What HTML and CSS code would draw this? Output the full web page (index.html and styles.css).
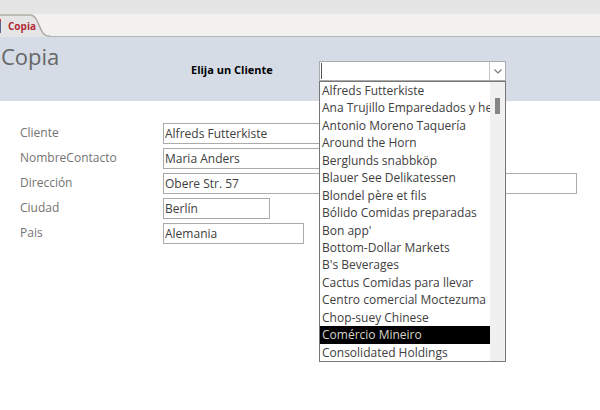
FILE: index.html
```html
<!DOCTYPE html>
<html lang="es">
  <head>
    <title>Copia</title>
    <meta charset="utf-8" />
    <link rel="stylesheet" href="styles.css">
  </head>
  <body>
    <div class="ribbon"></div>

    <div class="tabs">
      <button class="tab" type="button">
        <svg class="tab-shape" width="50" height="23" viewBox="0 0 50 23">
          <path d="M0 1H30C40 1 38 22 49 22V23H0Z" fill="#e5e5e5"/>
          <path d="M0 1H30C40 1 38 22 49 22H50" fill="none" stroke="#b0aaa4" stroke-width="1.5"/>
          <path d="M0 6H1V19H0Z" fill="#56668e"/>
          <path d="M0 5H1V8H0Z" fill="#b5404c"/>
        </svg>
        <span class="tab-text">Copia</span>
      </button>
    </div>

    <header class="header">
      <h1>Copia</h1>
      <label class="combo-label" for="elegir">Elija un Cliente</label>
      <div class="combo">
        <input id="elegir" class="combo-input" type="text" role="combobox" aria-expanded="true" aria-controls="lista">
        <span class="cursor"></span>
        <button class="combo-btn" type="button" aria-label="Abrir lista">
          <svg width="8" height="5" viewBox="0 0 8 5">
            <path d="M0.5 0.5L4 4L7.5 0.5" fill="none" stroke="#777" stroke-width="1.2"/>
          </svg>
        </button>
        <div class="dropdown">
          <ul id="lista" class="list" role="listbox">
            <li role="option">Alfreds Futterkiste</li>
            <li role="option">Ana Trujillo Emparedados y he</li>
            <li role="option">Antonio Moreno Taquería</li>
            <li role="option">Around the Horn</li>
            <li role="option">Berglunds snabbköp</li>
            <li role="option">Blauer See Delikatessen</li>
            <li role="option">Blondel père et fils</li>
            <li role="option">Bólido Comidas preparadas</li>
            <li role="option">Bon app'</li>
            <li role="option">Bottom-Dollar Markets</li>
            <li role="option">B's Beverages</li>
            <li role="option">Cactus Comidas para llevar</li>
            <li role="option">Centro comercial Moctezuma</li>
            <li role="option">Chop-suey Chinese</li>
            <li role="option" class="selected" aria-selected="true">Comércio Mineiro</li>
            <li role="option">Consolidated Holdings</li>
          </ul>
          <div class="scrollbar"><div class="thumb"></div></div>
        </div>
      </div>
    </header>

    <form class="form">
      <div class="row">
        <label for="cliente">Cliente</label>
        <input id="cliente" class="medium" type="text" value="Alfreds Futterkiste">
      </div>
      <div class="row">
        <label for="contacto">NombreContacto</label>
        <input id="contacto" class="medium" type="text" value="Maria Anders">
      </div>
      <div class="row">
        <label for="direccion">Dirección</label>
        <input id="direccion" class="full" type="text" value="Obere Str. 57">
      </div>
      <div class="row">
        <label for="ciudad">Ciudad</label>
        <input id="ciudad" class="small" type="text" value="Berlín">
      </div>
      <div class="row">
        <label for="pais">Pais</label>
        <input id="pais" class="normal" type="text" value="Alemania">
      </div>
    </form>
  </body>
</html>
```

FILE: styles.css
```css
* {
  box-sizing: border-box;
}

body {
  min-height: 100vh;
  margin: 0;
  background-color: #fff;
  color: #404040;
  font-family: "Open Sans", "Noto Sans", sans-serif;
  font-size: 12px;
}

input,
button {
  margin: 0;
  padding: 0;
  font: inherit;
  color: inherit;
  outline: none;
}

.ribbon {
  height: 14px;
  background-color: #e5e5e5;
}

/* Pestañas */
.tabs {
  height: 23px;
  background-color: #f2f1f0;
  border-bottom: 1px solid #b3b5b9;
}

.tab {
  position: relative;
  display: block;
  width: 50px;
  height: 23px;
  border: none;
  background: none;
  text-align: left;
}

.tab-shape {
  position: absolute;
  left: 0;
  top: 0;
}

.tab-text {
  position: relative;
  padding-left: 8px;
  color: #b02a38;
  font-size: 10px;
  font-weight: bold;
}

/* Encabezado */
.header {
  display: flex;
  height: 64px;
  padding-right: 94px;
  background-color: #d5dce6;
}

h1 {
  width: 191px;
  margin: 0;
  padding: 5px 0 0 1px;
  color: #666;
  font-size: 22px;
  font-weight: normal;
  line-height: 28px;
}

.combo-label {
  width: 128px;
  padding-top: 25px;
  color: #000;
  font-size: 11px;
  font-weight: bold;
  line-height: 16px;
}

.combo {
  position: relative;
  display: flex;
  flex: 1;
  height: 20px;
  margin-top: 24px;
  border: 1px solid #ababab;
  background-color: #fff;
}

.combo-input {
  flex: 1;
  min-width: 0;
  padding: 0 3px;
  border: none;
  background: none;
}

/* Cursor de texto */
.cursor {
  position: absolute;
  left: 1px;
  top: 1px;
  width: 1px;
  height: 16px;
  background-color: #555;
}

.combo-btn {
  display: flex;
  align-items: center;
  justify-content: center;
  width: 16px;
  border: none;
  border-left: 1px solid #c4c4c4;
  background-color: #fff;
}

.dropdown {
  position: absolute;
  z-index: 1;
  left: -1px;
  right: -1px;
  top: 19px;
  display: flex;
  height: 281px;
  border: 1px solid #777;
  background-color: #fff;
}

.list {
  display: flex;
  flex: 1;
  flex-direction: column;
  min-width: 0;
  margin: 0;
  padding: 0;
  list-style-type: none;
}

.list li {
  flex: 1;
  padding-left: 2px;
  line-height: 17px;
  white-space: nowrap;
}

.list .selected {
  background-color: #000;
  color: #d8d4cc;
}

.scrollbar {
  width: 15px;
  padding: 16px 5px 0;
  background-color: #f0f0f0;
}

.thumb {
  height: 16px;
  background-color: #858585;
}

/* Formulario */
.form {
  display: flex;
  flex-direction: column;
  gap: 4px;
  padding: 22px 23px 22px 20px;
}

.row {
  display: flex;
}

.row label {
  width: 143px;
  color: #737373;
  line-height: 19px;
}

.row input {
  height: 21px;
  padding: 0 1px 1px;
  border: 1px solid #ababab;
  background-color: #fff;
}

.row .small {
  width: 107px;
}

.row .normal {
  width: 141px;
}

.row .medium {
  width: 300px;
}

.row .full {
  flex: 1;
}
```
